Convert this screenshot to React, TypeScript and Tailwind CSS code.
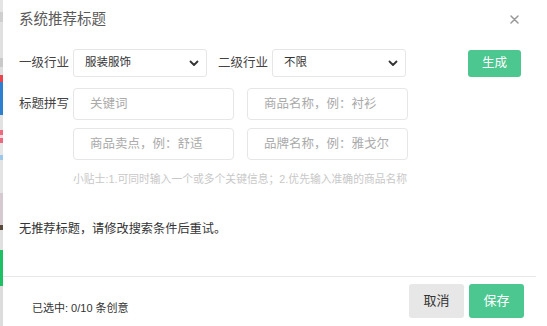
import React from "react";

const FONT = '"Liberation Sans", "Noto Sans CJK SC", sans-serif';

function Chevron() {
  return (
    <svg width="10" height="7" viewBox="0 0 10 7" fill="none">
      <path d="M1.5 1.5L5 5l3.5-3.5" stroke="#333" strokeWidth="1.8" strokeLinecap="round" strokeLinejoin="round" />
    </svg>
  );
}

function Select({ value }: { value: string }) {
  return (
    <div className="w-[134px] h-[28px] border border-[#e6e6e6] rounded-[3px] bg-white flex items-center justify-between pl-[11px] pr-[7px]">
      <span className="text-[11.5px] text-[#333]">{value}</span>
      <Chevron />
    </div>
  );
}

function Input({ placeholder }: { placeholder: string }) {
  return (
    <div className="w-[161px] h-[32px] border border-[#e6e6e6] rounded-[4px] bg-white flex items-center pl-[16px]">
      <span className="text-[12.5px] text-[#aaa]">{placeholder}</span>
    </div>
  );
}

export default function App() {
  return (
    <div className="flex w-[547px] h-[326px] bg-white overflow-hidden" style={{ fontFamily: FONT }}>
      <div className="w-[3px] h-full flex flex-col bg-[#dcdcdc]">
        <div className="h-[12px] bg-[#e4e4e4]" />
        <div className="h-[10px] bg-[#cfcfcf]" />
        <div className="h-[36px] bg-[#e0e0e0]" />
        <div className="h-[9px] bg-[#c9c9c9]" />
        <div className="h-[8px] bg-[#dedede]" />
        <div className="h-[7px] bg-[#e8464f]" />
        <div className="h-[33px] bg-[#2f7fd0]" />
        <div className="h-[15px] bg-[#e2e2e2]" />
        <div className="h-[5px] bg-[#ea6b7f]" />
        <div className="h-[3px] bg-[#f3d6dc]" />
        <div className="h-[5px] bg-[#ea6b7f]" />
        <div className="h-[12px] bg-[#e6e6e6]" />
        <div className="h-[5px] bg-[#9cc8ea]" />
        <div className="h-[33px] bg-[#e3e3e3]" />
        <div className="h-[32px] bg-[#d6c9cf]" />
        <div className="h-[5px] bg-[#5a4a3c]" />
        <div className="h-[20px] bg-[#e0e0e0]" />
        <div className="h-[36px] bg-[#1fbf63]" />
        <div className="flex-1 bg-[#dcdcdc]" />
      </div>
      <div className="w-[533px] flex flex-col">
        <div className="h-[39px] flex items-center justify-between pl-[16px] pr-[16px]">
          <span className="text-[14.5px] text-[#5a5a5a]">系统推荐标题</span>
          <svg width="9" height="9" viewBox="0 0 9 9" className="mr-[1px]">
            <path d="M1 1l7 7M8 1L1 8" stroke="#999" strokeWidth="1.5" strokeLinecap="round" />
          </svg>
        </div>
        <div className="mt-[10px] h-[28px] flex items-center pl-[16px]">
          <span className="w-[54px] text-[12.5px] text-[#444]">一级行业</span>
          <Select value="服装服饰" />
          <span className="ml-[11px] w-[54px] text-[12.5px] text-[#444]">二级行业</span>
          <Select value="不限" />
          <div className="ml-[62px] w-[53px] h-[27px] rounded-[3px] bg-[#4bc78f] flex items-center justify-center text-[12.5px] text-white">
            生成
          </div>
        </div>
        <div className="mt-[11px] h-[32px] flex items-center pl-[16px]">
          <span className="w-[54px] text-[12.5px] text-[#444]">标题拼写</span>
          <Input placeholder="关键词" />
          <div className="ml-[13px]">
            <Input placeholder="商品名称，例：衬衫" />
          </div>
        </div>
        <div className="mt-[8px] h-[32px] flex items-center pl-[70px]">
          <Input placeholder="商品卖点，例：舒适" />
          <div className="ml-[13px]">
            <Input placeholder="品牌名称，例：雅戈尔" />
          </div>
        </div>
        <div className="mt-[11px] h-[16px] leading-[16px] pl-[70px] text-[10.8px] text-[#c8c8c8] whitespace-nowrap">
          小贴士:1.可同时输入一个或多个关键信息；2.优先输入准确的商品名称
        </div>
        <div className="mt-[33px] h-[18px] leading-[18px] pl-[16px] text-[12.2px] text-[#333]">
          无推荐标题，请修改搜索条件后重试。
        </div>
        <div className="mt-[38px] h-px bg-[#e8e8e8]" />
        <div className="mt-[7px] flex items-start pl-[29px]">
          <span className="mt-[16px] h-[16px] leading-[16px] text-[11px] text-[#333]">已选中: 0/10 条创意</span>
          <div className="ml-auto mr-[12px] flex gap-[5px]">
            <div className="w-[55px] h-[34px] rounded-[3px] bg-[#e7e7e7] flex items-center justify-center text-[13px] text-[#333]">
              取消
            </div>
            <div className="w-[55px] h-[34px] rounded-[3px] bg-[#4bc78f] flex items-center justify-center text-[13px] text-white">
              保存
            </div>
          </div>
        </div>
      </div>
    </div>
  );
}
